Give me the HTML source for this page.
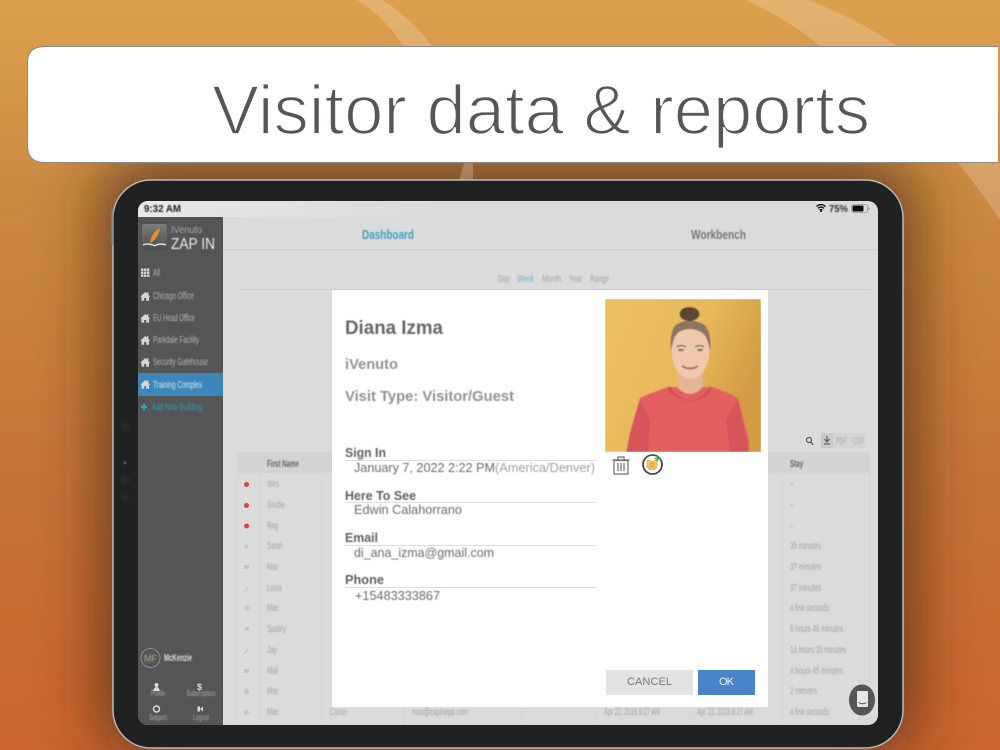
<!DOCTYPE html>
<html lang="en"><head><meta charset="utf-8"><title>Visitor data &amp; reports</title>
<style>
html,body{margin:0;padding:0;width:1000px;height:750px;overflow:hidden;background:#c4753a}
svg{display:block}
text{font-family:"Liberation Sans",sans-serif}
</style></head><body>
<svg xmlns="http://www.w3.org/2000/svg" width="1000" height="750" viewBox="0 0 1000 750">
<defs>
<linearGradient id="bg" x1="0" y1="0" x2="0" y2="1">
<stop offset="0" stop-color="#dca14e"/><stop offset=".25" stop-color="#cb8a42"/><stop offset=".6" stop-color="#c4763a"/><stop offset="1" stop-color="#cb6430"/>
</linearGradient>
<filter id="sh" x="-20%" y="-20%" width="140%" height="140%"><feGaussianBlur stdDeviation="30"/></filter>
<filter id="b1" x="-5%" y="-30%" width="110%" height="160%"><feGaussianBlur stdDeviation=".4"/></filter>
<filter id="b2" x="-5%" y="-5%" width="110%" height="110%"><feGaussianBlur stdDeviation=".3"/></filter>
<filter id="b3" x="-5%" y="-5%" width="110%" height="110%"><feGaussianBlur stdDeviation=".6"/></filter>
<linearGradient id="ph" x1="0" y1="0" x2="1" y2=".4"><stop offset="0" stop-color="#ecc062"/><stop offset=".6" stop-color="#e8b95a"/><stop offset="1" stop-color="#d29c45"/></linearGradient>
<linearGradient id="lg" x1="0" y1="0" x2="0" y2="1"><stop offset="0" stop-color="#7c7c7c"/><stop offset="1" stop-color="#4c4c4c"/></linearGradient>
<linearGradient id="st" x1="0" y1="0" x2="1" y2="0"><stop offset="0" stop-color="#e8e8e8"/><stop offset="1" stop-color="#dbdbdb"/></linearGradient>
<clipPath id="scr"><rect x="138" y="201" width="740" height="524" rx="10"/></clipPath>
<clipPath id="pc"><rect x="605" y="299" width="156" height="153"/></clipPath>
<path id="home" d="M-.5 4.500 4.200 0 5.800 1.500V.3H7.400V3L9 4.500 8 5.200V8.700H5.200V6H3.200V8.700H.5V5.200Z"/>
</defs>

<rect width="1000" height="750" fill="url(#bg)"/>
<path d="M357 0H383Q415 22 432 46L440 60H412Q390 20 357 0Z" fill="#fff" fill-opacity=".2"/>
<path d="M746 0H808Q860 20 897 46L905 60H835Q800 25 746 0Z" fill="#fff" fill-opacity=".2"/>

<rect x="100" y="160" width="816" height="595" rx="40" fill="#4a2a12" fill-opacity=".72" filter="url(#sh)"/>
<path d="M958 163H1000V220Q980 190 958 163Z" fill="#fff" fill-opacity=".2"/>
<path d="M459 180 464 163H473V180Z" fill="#fff" fill-opacity=".22"/>

<path d="M998 47H45Q27.500 47 27.500 62V146Q27.500 162.500 45 162.500H998Z" fill="#fff"/>
<path d="M998 46.500H45Q27.500 46.500 27.500 62V146Q27.500 162.500 45 162.500H998" fill="none" stroke="#8d8a85"/>
<text x="212" y="134" font-size="70" textLength="658" lengthAdjust="spacingAndGlyphs" fill="#555657" stroke="#fff" stroke-width="1.800">Visitor data &amp; reports</text>

<rect x="113" y="180" width="790" height="568" rx="38" fill="#1f2221" stroke="#b9bbbc" stroke-width="1.500"/>
<rect x="111.500" y="211" width="2" height="34" fill="#8a8a8a"/>
<g fill="#272929"><circle cx="125" cy="427" r="5"/><circle cx="125" cy="480" r="5"/><circle cx="125" cy="498" r="4"/></g>
<circle cx="125" cy="463" r="1.500" fill="#3a5f8e"/>

<g clip-path="url(#scr)">
<rect x="138" y="201" width="740" height="524" fill="#dbdbdb"/>
<rect x="138" y="201" width="300" height="16" fill="url(#st)"/>
<g filter="url(#b2)">
<rect x="223" y="249" width="655" height="1.500" fill="#d0d0d0"/>
<rect x="237" y="289" width="633" height="1" fill="#cfcfcf"/>
<rect x="138" y="217" width="85" height="508" fill="#535456"/>
<rect x="138" y="373" width="85" height="23" fill="#3a87bb"/>
</g>

<g filter="url(#b1)">
<text x="144" y="212" font-size="10" font-weight="700" textLength="37" lengthAdjust="spacingAndGlyphs" fill="#222">9:32 AM</text>
<text x="829" y="212" font-size="10" font-weight="700" textLength="19" lengthAdjust="spacingAndGlyphs" fill="#333">75%</text>
<text x="362" y="239" font-size="12.500" font-weight="700" textLength="52" lengthAdjust="spacingAndGlyphs" fill="#3ea3c4">Dashboard</text>
<text x="691" y="239" font-size="12.500" font-weight="700" textLength="55" lengthAdjust="spacingAndGlyphs" fill="#787674">Workbench</text>
<g font-size="10" fill="#a6a6a6">
<text x="498" y="282" textLength="12" lengthAdjust="spacingAndGlyphs">Day</text>
<text x="517" y="282" textLength="17" lengthAdjust="spacingAndGlyphs" fill="#6fb3cc">Week</text>
<text x="542" y="282" textLength="19" lengthAdjust="spacingAndGlyphs">Month</text>
<text x="569" y="282" textLength="13" lengthAdjust="spacingAndGlyphs">Year</text>
<text x="590" y="282" textLength="19" lengthAdjust="spacingAndGlyphs">Range</text>
</g>
<text x="171" y="233" font-size="10" textLength="31" lengthAdjust="spacingAndGlyphs" fill="#a9a9a9">IVenuto</text>
<text x="171" y="249" font-size="16" textLength="44" lengthAdjust="spacingAndGlyphs" fill="#ececec">ZAP IN</text>
<g font-size="10" fill="#b4b4b4">
<text x="153" y="276" textLength="7" lengthAdjust="spacingAndGlyphs">All</text>
<text x="153" y="299" textLength="41" lengthAdjust="spacingAndGlyphs">Chicago Office</text>
<text x="153" y="321" textLength="42" lengthAdjust="spacingAndGlyphs">EU Head Office</text>
<text x="153" y="343" textLength="46" lengthAdjust="spacingAndGlyphs">Parkdale Facility</text>
<text x="153" y="365" textLength="55" lengthAdjust="spacingAndGlyphs">Security Gatehouse</text>
<text x="153" y="388" textLength="49" lengthAdjust="spacingAndGlyphs" fill="#d3e3ee">Training Complex</text>
<text x="152" y="410" textLength="50" lengthAdjust="spacingAndGlyphs" fill="#2c9bb5">Add New Building</text>
</g>
<text x="164" y="661" font-size="10" font-weight="700" textLength="28" lengthAdjust="spacingAndGlyphs" fill="#ddd">McKenzie</text>
<g font-size="8" fill="#a8a8a8" text-anchor="middle">
<text x="158" y="696" textLength="14" lengthAdjust="spacingAndGlyphs">Profile</text>
<text x="201" y="696" textLength="29" lengthAdjust="spacingAndGlyphs">Subscription</text>
<text x="158" y="720" textLength="18" lengthAdjust="spacingAndGlyphs">Support</text>
<text x="201" y="720" textLength="16" lengthAdjust="spacingAndGlyphs">Logout</text>
</g>
<text x="150.500" y="661.500" font-size="9" text-anchor="middle" fill="#b0a98f">MF</text>
</g>

<g filter="url(#b2)">
<rect x="142" y="224" width="25" height="26" rx="2.500" fill="url(#lg)"/>
<path d="M160 228C154 231 151 236 150 243 155 241 159 235 160 228Z" fill="#e09232"/>
<path d="M143 244Q149 242 154.500 245 160 242 166 244V245.500Q160 243.500 154.500 246.500 149 243.500 143 245.500Z" fill="#e2e2e2"/>
<g fill="#d5d5d5">
<rect x="141" y="268.500" width="2.400" height="2.400"/><rect x="144" y="268.500" width="2.400" height="2.400"/><rect x="147" y="268.500" width="2.400" height="2.400"/>
<rect x="141" y="271.500" width="2.400" height="2.400"/><rect x="144" y="271.500" width="2.400" height="2.400"/><rect x="147" y="271.500" width="2.400" height="2.400"/>
<rect x="141" y="274.500" width="2.400" height="2.400"/><rect x="144" y="274.500" width="2.400" height="2.400"/><rect x="147" y="274.500" width="2.400" height="2.400"/>
<use href="#home" x="141" y="292"/><use href="#home" x="141" y="314"/><use href="#home" x="141" y="336"/><use href="#home" x="141" y="358"/><use href="#home" x="141" y="380"/>
</g>
<path d="M141 407H147M144 404V410" stroke="#2aa5c0" stroke-width="2.200"/>
<circle cx="150.500" cy="658" r="9.500" fill="none" stroke="#9a9a9a" stroke-width=".8"/>
<g fill="#dadada">
<circle cx="156.500" cy="685" r="2"/><path d="M153.500 691Q153.500 687 156.500 687 159.500 687 159.500 691Z"/>
</g>
<text x="199.500" y="690" font-size="9" font-weight="700" text-anchor="middle" fill="#dadada">$</text>
<circle cx="156.500" cy="709" r="3" fill="none" stroke="#dadada" stroke-width="1.500"/>
<path d="M197.500 706.500H200V711.500H197.500ZM200 709 203 706.500V711.500Z" fill="#dadada"/>
</g>

<!-- table -->
<g filter="url(#b2)">
<rect x="237" y="452" width="633" height="21" fill="#d3d3d3"/>
<path d="M237 452V725M259.500 452V725M322 452V725M782 452V725M869.500 452V725M689.500 452V725M597 452V725M522 452V725M404 452V725" stroke="#d3d3d3" stroke-width=".7" fill="none"/>
<g fill="#de4242"><circle cx="246.500" cy="484.500" r="2.500"/><circle cx="246.500" cy="505.500" r="2.500"/><circle cx="246.500" cy="526" r="2.500"/></g>
<g fill="#c4c4c4">
<circle cx="246.500" cy="546.500" r="2"/><rect x="244" y="565" width="5" height="4"/><path d="M244 591 248 586 249 587 245 592Z"/><rect x="245" y="606" width="4" height="4"/><rect x="245" y="627" width="4" height="4"/><path d="M244 653 248 648 249 649 245 654Z"/><rect x="244" y="669" width="5" height="4"/><circle cx="246.500" cy="691.500" r="2.500"/><circle cx="246.500" cy="712.500" r="2.500"/>
</g>
</g>
<g filter="url(#b1)" font-size="10" fill="#a3a3a3">
<text x="267" y="467" font-weight="700" textLength="32" lengthAdjust="spacingAndGlyphs" fill="#666">First Name</text>
<text x="790" y="467" font-weight="700" textLength="13" lengthAdjust="spacingAndGlyphs" fill="#666">Stay</text>
<text x="267" y="487" textLength="12" lengthAdjust="spacingAndGlyphs">Wes</text>
<text x="267" y="508" textLength="18" lengthAdjust="spacingAndGlyphs">Sindie</text>
<text x="267" y="529" textLength="11" lengthAdjust="spacingAndGlyphs">Reg</text>
<text x="267" y="549" textLength="16" lengthAdjust="spacingAndGlyphs">Sarah</text>
<text x="267" y="570" textLength="11" lengthAdjust="spacingAndGlyphs">Max</text>
<text x="267" y="591" textLength="15" lengthAdjust="spacingAndGlyphs">Louis</text>
<text x="267" y="611" textLength="11" lengthAdjust="spacingAndGlyphs">Max</text>
<text x="267" y="632" textLength="19" lengthAdjust="spacingAndGlyphs">Spidey</text>
<text x="267" y="653" textLength="10" lengthAdjust="spacingAndGlyphs">Jay</text>
<text x="267" y="674" textLength="11" lengthAdjust="spacingAndGlyphs">Mali</text>
<text x="267" y="694" textLength="11" lengthAdjust="spacingAndGlyphs">Max</text>
<text x="267" y="715" textLength="11" lengthAdjust="spacingAndGlyphs">Max</text>
<text x="330" y="715" textLength="17" lengthAdjust="spacingAndGlyphs">Corso</text>
<text x="412" y="715" textLength="56" lengthAdjust="spacingAndGlyphs">max@capinepp.com</text>
<text x="604" y="715" textLength="56" lengthAdjust="spacingAndGlyphs">Apr 22, 2018 9:27 AM</text>
<text x="697" y="715" textLength="56" lengthAdjust="spacingAndGlyphs">Apr 22, 2018 9:27 AM</text>
<text x="790" y="487">-</text><text x="790" y="508">-</text><text x="790" y="529">-</text>
<text x="790" y="549" textLength="31" lengthAdjust="spacingAndGlyphs">35 minutes</text>
<text x="790" y="570" textLength="31" lengthAdjust="spacingAndGlyphs">37 minutes</text>
<text x="790" y="591" textLength="31" lengthAdjust="spacingAndGlyphs">37 minutes</text>
<text x="790" y="611" textLength="39" lengthAdjust="spacingAndGlyphs">a few seconds</text>
<text x="790" y="632" textLength="53" lengthAdjust="spacingAndGlyphs">9 hours 46 minutes</text>
<text x="790" y="653" textLength="56" lengthAdjust="spacingAndGlyphs">14 hours 30 minutes</text>
<text x="790" y="674" textLength="53" lengthAdjust="spacingAndGlyphs">4 hours 45 minutes</text>
<text x="790" y="694" textLength="27" lengthAdjust="spacingAndGlyphs">2 minutes</text>
<text x="790" y="715" textLength="39" lengthAdjust="spacingAndGlyphs">a few seconds</text>
</g>
<g filter="url(#b2)">
<rect x="821" y="433" width="45" height="15" fill="#d5d5d5"/>
<rect x="821" y="433" width="12" height="15" fill="#cacaca"/>
<path d="M827 436V441M824.500 439 827 442 829.500 439M824 444H830" stroke="#666" stroke-width="1.300" fill="none"/>
<circle cx="809" cy="440" r="2.500" fill="none" stroke="#555" stroke-width="1.200"/><path d="M811 442 813 445" stroke="#555" stroke-width="1.300"/>
</g>
<g filter="url(#b1)" font-size="9.500" fill="#a6a6a6">
<text x="836" y="444" textLength="11" lengthAdjust="spacingAndGlyphs">PDF</text>
<text x="853" y="444" textLength="11" lengthAdjust="spacingAndGlyphs">CSV</text>
</g>
</g>

<!-- wifi / battery -->
<g filter="url(#b2)">
<path d="M816.500 206.500Q821 202.700 825.500 206.500M818 208.300Q821 205.800 824 208.300M819.500 210Q821 208.800 822.500 210" fill="none" stroke="#111" stroke-width="1.300"/>
<circle cx="821" cy="211" r="1" fill="#111"/>
<rect x="851.500" y="204.500" width="16" height="8" rx="2" fill="none" stroke="#999" stroke-width=".8"/>
<rect x="852.500" y="205.500" width="11" height="6" rx="1" fill="#111"/>
<rect x="868.500" y="207" width="1" height="3" fill="#999"/>
</g>

<!-- modal -->
<rect x="332" y="290" width="436" height="417" fill="#fff"/>
<g filter="url(#b1)">
<text x="345" y="334" font-size="19" font-weight="700" textLength="98" lengthAdjust="spacingAndGlyphs" fill="#666">Diana Izma</text>
<text x="345" y="369" font-size="14.500" font-weight="700" textLength="53" lengthAdjust="spacingAndGlyphs" fill="#929292">iVenuto</text>
<text x="345" y="401" font-size="14.500" font-weight="700" textLength="169" lengthAdjust="spacingAndGlyphs" fill="#929292">Visit Type: Visitor/Guest</text>
<g font-size="13" font-weight="700" fill="#5e5e5e">
<text x="345" y="457" textLength="41" lengthAdjust="spacingAndGlyphs">Sign In</text>
<text x="345" y="500" textLength="71" lengthAdjust="spacingAndGlyphs">Here To See</text>
<text x="345" y="542" textLength="33" lengthAdjust="spacingAndGlyphs">Email</text>
<text x="345" y="584" textLength="39" lengthAdjust="spacingAndGlyphs">Phone</text>
</g>
<g font-size="13" fill="#6a6a6a">
<text x="354" y="472" textLength="141" lengthAdjust="spacingAndGlyphs">January 7, 2022 2:22 PM</text>
<text x="495" y="472" textLength="100" lengthAdjust="spacingAndGlyphs" fill="#a0a0a0">(America/Denver)</text>
<text x="354" y="514" textLength="108" lengthAdjust="spacingAndGlyphs">Edwin Calahorrano</text>
<text x="354" y="557" textLength="140" lengthAdjust="spacingAndGlyphs">di_ana_izma@gmail.com</text>
<text x="355" y="600" textLength="85" lengthAdjust="spacingAndGlyphs">+15483333867</text>
</g>
</g>
<g stroke="#dedede" stroke-width="1">
<path d="M345 460.500H596M345 502.500H596M345 545.500H596M345 587.500H596"/>
</g>

<!-- photo -->
<g clip-path="url(#pc)">
<g filter="url(#b3)">
<rect x="605" y="299" width="156" height="153" fill="url(#ph)"/>
<path d="M626 452 630 432 640 398Q650 393 668 387L712 387Q728 392 738 398L749 440V452Z" fill="#e35f61"/>
<path d="M640 400Q633 420 627 452H648L650 420ZM738 400 749 452H730L726 420Z" fill="#d5545a"/>
<path d="M668 385Q690 416 712 385L710 392Q690 410 670 392Z" fill="#cf4c50"/>
<path d="M678 365H702V388Q690 400 678 388Z" fill="#e5b596"/>
<ellipse cx="690.500" cy="350" rx="19" ry="29" fill="#eec9ad"/>
<path d="M671 352Q669 330 677 324 690 317 703 324 712 330 710 352 708 336 701 332 690 326 679 332 673 336 671 352Z" fill="#8c7662"/>
<ellipse cx="689.500" cy="314" rx="10" ry="7" fill="#5c4433"/>
<path d="M677 347Q681 344 686 347M695 347Q699 344 704 347" stroke="#6d5a4c" stroke-width="1.300" fill="none"/>
<ellipse cx="681" cy="350" rx="3" ry="1.400" fill="#7b7b72"/><ellipse cx="700" cy="350" rx="3" ry="1.400" fill="#7b7b72"/>
<path d="M682 366Q690 371 698 366" stroke="#b96b62" stroke-width="2.200" fill="none"/>
</g>
</g>

<!-- trash -->
<g fill="none" stroke="#6e6e6e" stroke-width="1.200" filter="url(#b2)">
<path d="M612.500 460H629.500M618 460V457H624V460M614 460.500V474H628V460.500Z"/>
<path d="M618 463V471M621 463V471M624 463V471"/>
</g>
<g filter="url(#b2)">
<circle cx="652.500" cy="464.500" r="9.500" fill="#fff" stroke="#4a4a4a" stroke-width="1.800"/>
<path d="M647 460 652 461 657 460 657 467Q652 473 647 467Z" fill="#f3c766" stroke="#e0a53c" stroke-width=".6"/>
<circle cx="652" cy="465" r="2" fill="none" stroke="#d58f2a" stroke-width=".8"/>
<path d="M654.500 458.500H660.500M657.500 455.500V461.500" stroke="#2eb34a" stroke-width="1.500"/>
</g>

<!-- buttons -->
<rect x="606" y="670" width="87" height="25" fill="#e2e3e3"/>
<rect x="698" y="670" width="57" height="25" fill="#4a84c8"/>
<g filter="url(#b2)" font-size="11">
<text x="627" y="685" textLength="45" fill="#777">CANCEL</text>
<text x="719" y="685" textLength="15" fill="#e8f0fa">OK</text>
</g>

<!-- chat -->
<ellipse cx="862" cy="700" rx="13" ry="15.500" fill="#555"/>
<g filter="url(#b2)">
<path d="M857 692Q857 691 858 691H867Q868 691 868 692V705Q868 707 867 707H858Q857 707 857 705Z" fill="#e6e6e6"/>
<path d="M858.500 702.500Q862.500 705 866.500 702.500" stroke="#555" stroke-width=".9" fill="none"/>
</g>
</svg>
</body></html>
